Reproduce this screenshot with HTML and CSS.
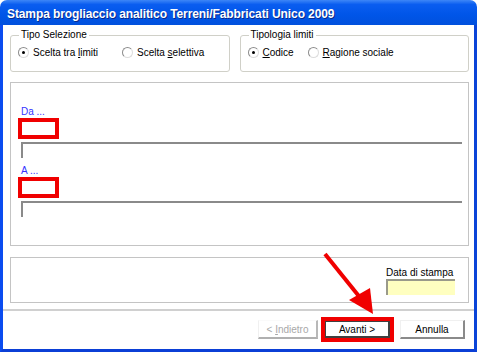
FILE: index.html
```html
<!DOCTYPE html>
<html lang="it">
<head>
    <meta charset="UTF-8">
    <title>Stampa brogliaccio analitico</title>
    <link rel="stylesheet" href="styles.css">
</head>
<body>
    <div class="window">
        <div class="titlebar">Stampa brogliaccio analitico Terreni/Fabbricati Unico 2009</div>
        <div class="client">
            <div class="groups">
                <fieldset class="group group-tipo">
                    <legend>Tipo Selezione</legend>
                    <div class="radios">
                        <label class="radio"><span class="dot checked"></span><span>Scelta tra <u>l</u>imiti</span></label>
                        <label class="radio"><span class="dot"></span><span>Scelta <u>s</u>elettiva</span></label>
                    </div>
                </fieldset>
                <fieldset class="group group-limiti">
                    <legend>Tipologia limiti</legend>
                    <div class="radios">
                        <label class="radio"><span class="dot checked"></span><span><u>C</u>odice</span></label>
                        <label class="radio"><span class="dot"></span><span><u>R</u>agione sociale</span></label>
                    </div>
                </fieldset>
            </div>

            <div class="panel limits">
                <div class="field-label">Da ...</div>
                <div class="code-box"></div>
                <div class="desc-box"></div>
                <div class="field-label label-a">A ...</div>
                <div class="code-box"></div>
                <div class="desc-box"></div>
            </div>

            <div class="panel print">
                <div class="date-field">
                    <div class="date-label">Data di stampa</div>
                    <div class="date-input"></div>
                </div>
            </div>

            <div class="separator"></div>

            <div class="buttons">
                <button class="btn btn-disabled">&lt; <u>I</u>ndietro</button>
                <div class="highlight">
                    <button class="btn btn-default">Avanti &gt;</button>
                </div>
                <button class="btn">Annulla</button>
            </div>
        </div>

        <!-- freccia rossa che indica il pulsante Avanti -->
        <svg class="arrow" width="477" height="352" viewBox="0 0 477 352">
            <line x1="325" y1="254" x2="362" y2="300" stroke="#f00000" stroke-width="4"/>
            <polygon points="373,314 349,300 370,288" fill="#f00000"/>
        </svg>
    </div>
</body>
</html>
```

FILE: styles.css
```css
html, body {
    margin: 0;
    padding: 0;
}
body {
    width: 477px;
    height: 352px;
    overflow: hidden;
    background: #ffffff;
    font-family: 'Liberation Sans', Arial, sans-serif;
    font-size: 10px;
    color: #000;
}
.window {
    position: relative;
    width: 477px;
    height: 352px;
}
.titlebar {
    height: 25px;
    box-sizing: border-box;
    padding: 3px 0 0 7px;
    line-height: 22px;
    color: #fff;
    font-weight: bold;
    font-size: 12px;
    letter-spacing: -0.1px;
    background: linear-gradient(#3d86f7, #0a5df0 18%, #0055e8 60%, #0150dd);
    border-radius: 7px 7px 0 0;
    text-shadow: 1px 1px 0 #0a2a8a;
}
.client {
    height: 327px;
    box-sizing: border-box;
    border-left: 3px solid #0a4cf0;
    border-right: 3px solid #0a44d8;
    border-bottom: 3px solid #0b3fd6;
    padding: 4px 5px 0 7px;
    background: #fff;
}
.groups {
    display: flex;
    gap: 10px;
}
.group {
    margin: 0;
    height: 43px;
    box-sizing: border-box;
    padding: 4px 6px 0 7px;
    border: 1px solid #d0d0c8;
    border-radius: 3px;
}
.group-tipo { width: 220px; }
.group-limiti { width: 230px; }
.group legend {
    padding: 0 2px;
    margin-left: 1px;
    line-height: 12px;
}
.radios {
    display: flex;
    height: 14px;
    align-items: center;
}
.group-tipo .radio:first-child { width: 104px; }
.group-limiti .radio:first-child { width: 60px; }
.radio {
    display: flex;
    align-items: center;
}
.dot {
    width: 9px;
    height: 9px;
    border: 1px solid #8c8c8c;
    border-right-color: #dcdcdc;
    border-bottom-color: #dcdcdc;
    border-radius: 50%;
    margin-right: 4px;
    position: relative;
    background: #fff;
}
.dot.checked::after {
    content: "";
    position: absolute;
    left: 3px;
    top: 3px;
    width: 3px;
    height: 3px;
    border-radius: 50%;
    background: #000;
}
.panel {
    border: 1px solid #c4c4c4;
    box-sizing: border-box;
}
.limits {
    margin-top: 10px;
    height: 164px;
    padding: 23px 6px 0 7px;
}
.field-label {
    color: #3333ff;
    line-height: 11px;
    margin-left: 3px;
}
.label-a {
    margin-top: 7px;
}
.code-box {
    width: 33px;
    height: 13px;
    border: 4px solid #f00000;
    margin-top: 1px;
}
.desc-box {
    margin: 3px 0 0 3px;
    height: 16px;
    box-sizing: border-box;
    border-top: 2px solid #8a8a8a;
    border-left: 2px solid #8a8a8a;
}
.print {
    margin-top: 11px;
    height: 46px;
    display: flex;
    justify-content: flex-end;
    padding: 9px 13px 0 0;
}
.date-label {
    line-height: 11px;
}
.date-input {
    margin-top: 1px;
    width: 69px;
    height: 16px;
    box-sizing: border-box;
    background: #ffffc0;
    border-top: 2px solid #9a9a8a;
    border-left: 2px solid #9a9a8a;
}
.separator {
    margin: 6px -5px 0 -7px;
    height: 2px;
    background: #d0d0d0;
}
.buttons {
    margin-top: 6px;
    display: flex;
    justify-content: flex-end;
    align-items: center;
    padding-right: 4px;
}
.btn {
    font-family: 'Liberation Sans', Arial, sans-serif;
    font-size: 10px;
    width: 65px;
    height: 19px;
    padding: 0;
    background: #fff;
    color: #000;
    border: 1px solid #f0f0f0;
    border-right: 2px solid #8a8a8a;
    border-bottom: 2px solid #8a8a8a;
}
.btn-disabled {
    width: 60px;
    color: #a8a8a8;
    border-color: #fafafa #b8b8b8 #b0b0b0 #f0f0f0;
    margin-right: 3px;
}
.highlight {
    border: 4px solid #f00000;
    margin-right: 6px;
}
.btn-default {
    display: block;
    height: 17px;
    border: 1px solid #404040;
    border-right-width: 2px;
    border-bottom-width: 2px;
}
.arrow {
    position: absolute;
    left: 0;
    top: 0;
    pointer-events: none;
}
```
